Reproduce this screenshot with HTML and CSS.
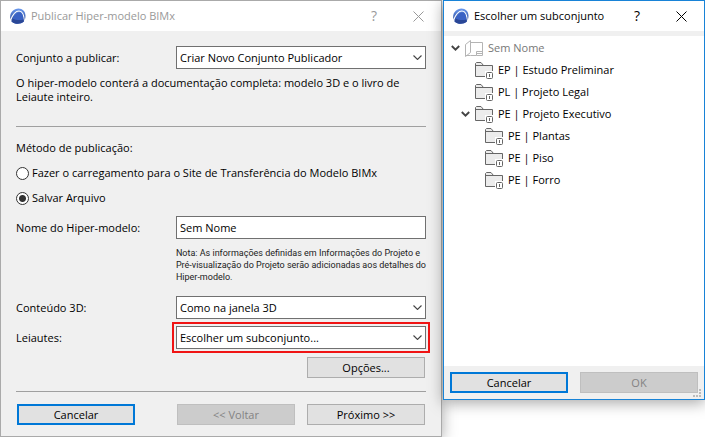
FILE: index.html
```html
<!DOCTYPE html>
<html lang="pt-BR">
<head>
    <meta charset="UTF-8">
    <meta name="viewport" content="width=device-width, initial-scale=1.0">
    <title>Publicar Hiper-modelo BIMx</title>
    <link rel="stylesheet" href="styles.css">
</head>
<body>
    <svg class="symbols" aria-hidden="true">
        <defs>
            <linearGradient id="blue" x1="0" y1="0" x2="0" y2="1">
                <stop offset="0" stop-color="#6a9af0"/>
                <stop offset="1" stop-color="#2a4796"/>
            </linearGradient>
        </defs>
        <symbol id="logo" viewBox="0 0 16 16">
            <path d="M.2 10C-.4 4.500 3.500.4 8.500.4c4 0 7 3 7 7.300 0 2.500-.6 4.300-1.800 5.800L8 12 1 12.500z" fill="url(#blue)"/>
            <path d="M.5 12.500C2.500 7 5.500 3 9 3c3.500 0 5 3.500 5.300 10" fill="none" stroke="#fff" stroke-width="1.200"/>
            <path d="M1.500 13.500C3.500 8 6.600 4.200 9.200 4.200c2.800 0 4.200 3.600 4.500 9.600-3.200 2.700-9 2.700-12.200-.3z" fill="#3a62c4"/>
            <path d="M1.500 13.500l1.200-2.700c3.300 1.600 7.400 1.600 10.900.6l.1 2.400c-3.200 2.700-9 2.700-12.200-.3z" fill="#2a4796"/>
        </symbol>
        <symbol id="close" viewBox="0 0 11 11">
            <path d="M.5.5l10 10M10.5.5l-10 10" fill="none" stroke="currentColor"/>
        </symbol>
        <symbol id="chevron" viewBox="0 0 9 5">
            <path d="M.5.5l4 4 4-4" fill="none" stroke="#444" stroke-width="1.1"/>
        </symbol>
        <symbol id="arrow" viewBox="0 0 9 6">
            <path d="M.8 1l3.700 3.600L8.200 1" fill="none" stroke="#444" stroke-width="1.900"/>
        </symbol>
        <symbol id="book" viewBox="0 0 18 17">
            <path d="M.5 4.500L5.500.5v12l-5 4zM5.500 2.500h12v8M5.500 15.500h-5M5.500 15.500h6" fill="none" stroke="#b4b4b4"/>
            <path d="M17.500 10v5.500h-6v-4h6M12 13.500h5" fill="none" stroke="#b4b4b4"/>
        </symbol>
        <symbol id="folder" viewBox="0 0 18 17">
            <path d="M.5 14.500V1.500L1.500.5h4l3 3h9v11z" fill="#ececec"/>
            <path d="M10 14.500H.5V1.500L1.500.5h4.500l2.500 3M.5 3.500h17V9" fill="none" stroke="#666"/>
            <path d="M10 9h8v8h-8z" fill="#fff"/>
            <rect x="11.500" y="10.500" width="6" height="6" rx="1" fill="#fff" stroke="#666"/>
            <path d="M14.500 12v3" stroke="#666"/>
        </symbol>
    </svg>

    <div class="desktop">
        <form class="window publish">
            <header class="titlebar">
                <svg class="logo"><use href="#logo"/></svg>
                <h1>Publicar Hiper-modelo BIMx</h1>
                <button type="button" class="title-btn" aria-label="Ajuda">?</button>
                <button type="button" class="title-btn" aria-label="Fechar"><svg class="close"><use href="#close"/></svg></button>
            </header>

            <div class="content">
                <div class="row">
                    <label for="set">Conjunto a publicar:</label>
                    <div class="select">
                        <select id="set"><option>Criar Novo Conjunto Publicador</option></select>
                        <svg class="chevron"><use href="#chevron"/></svg>
                    </div>
                </div>
                <p class="info">O hiper-modelo conterá a documentação completa: modelo 3D e o livro de Leiaute inteiro.</p>

                <hr>

                <fieldset class="method">
                    <legend>Método de publicação:</legend>
                    <label><input type="radio" name="method">Fazer o carregamento para o Site de Transferência do Modelo BIMx</label>
                    <label><input type="radio" name="method" checked>Salvar Arquivo</label>
                </fieldset>

                <div class="row">
                    <label for="name">Nome do Hiper-modelo:</label>
                    <input type="text" id="name" value="Sem Nome">
                </div>
                <p class="note">Nota: As informações definidas em Informações do Projeto e Pré-visualização do Projeto serão adicionadas aos detalhes do Hiper-modelo.</p>

                <div class="row">
                    <label for="content3d">Conteúdo 3D:</label>
                    <div class="select">
                        <select id="content3d"><option>Como na janela 3D</option></select>
                        <svg class="chevron"><use href="#chevron"/></svg>
                    </div>
                </div>
                <div class="row layouts">
                    <label for="layouts">Leiautes:</label>
                    <div class="select highlight">
                        <select id="layouts"><option>Escolher um subconjunto...</option></select>
                        <svg class="chevron"><use href="#chevron"/></svg>
                    </div>
                </div>
                <div class="options">
                    <button type="button" class="btn">Opções...</button>
                </div>

                <hr>

                <div class="actions">
                    <button type="button" class="btn primary cancel">Cancelar</button>
                    <button type="button" class="btn" disabled>&lt;&lt; Voltar</button>
                    <button type="button" class="btn">Próximo &gt;&gt;</button>
                </div>
            </div>
        </form>

        <section class="window chooser">
            <header class="titlebar">
                <svg class="logo"><use href="#logo"/></svg>
                <h2>Escolher um subconjunto</h2>
                <button type="button" class="title-btn" aria-label="Ajuda">?</button>
                <button type="button" class="title-btn" aria-label="Fechar"><svg class="close"><use href="#close"/></svg></button>
            </header>

            <ul class="tree">
                <li>
                    <div class="node root"><svg class="arrow"><use href="#arrow"/></svg><svg class="icon"><use href="#book"/></svg>Sem Nome</div>
                    <ul>
                        <li><div class="node"><span class="arrow"></span><svg class="icon"><use href="#folder"/></svg>EP | Estudo Preliminar</div></li>
                        <li><div class="node"><span class="arrow"></span><svg class="icon"><use href="#folder"/></svg>PL | Projeto Legal</div></li>
                        <li>
                            <div class="node"><svg class="arrow"><use href="#arrow"/></svg><svg class="icon"><use href="#folder"/></svg>PE | Projeto Executivo</div>
                            <ul>
                                <li><div class="node"><span class="arrow"></span><svg class="icon"><use href="#folder"/></svg>PE | Plantas</div></li>
                                <li><div class="node"><span class="arrow"></span><svg class="icon"><use href="#folder"/></svg>PE | Piso</div></li>
                                <li><div class="node"><span class="arrow"></span><svg class="icon"><use href="#folder"/></svg>PE | Forro</div></li>
                            </ul>
                        </li>
                    </ul>
                </li>
            </ul>

            <footer class="chooser-actions">
                <button type="button" class="btn primary">Cancelar</button>
                <button type="button" class="btn" disabled>OK</button>
                <svg class="grip" viewBox="0 0 8 8" fill="#bbb">
                    <path d="M6 0h2v2H6zM6 3h2v2H6zM0 6h2v2H0zM3 6h2v2H3zM6 6h2v2H6z"/>
                </svg>
            </footer>
        </section>
    </div>
</body>
</html>
```

FILE: styles.css
```css
* {
    box-sizing: border-box;
}

body {
    margin: 0;
    background-color: #fff;
    color: #000;
    font-family: "Open Sans", "Noto Sans", sans-serif;
    font-size: 11px;
    line-height: 14px;
}

h1,
h2,
p,
ul,
fieldset {
    margin: 0;
    padding: 0;
}

ul {
    list-style: none;
}

svg {
    display: block;
    flex: none;
}

.symbols {
    position: absolute;
    width: 0;
    height: 0;
}

.desktop {
    display: grid;
    grid-template-columns: 442fr 262fr;
    gap: 1px;
    align-items: start;
}

.window {
    border: 1px solid #aaa;
    background-color: #f0f0f0;
    box-shadow: 0 3px 14px rgba(0, 0, 0, 0.35);
}

.titlebar {
    display: flex;
    align-items: center;
    height: 30px;
    padding: 0 17px 0 9px;
    background-color: #fff;
}

.titlebar h1,
.titlebar h2 {
    flex: 1;
    font-size: 11px;
    font-weight: normal;
    white-space: nowrap;
}

.logo {
    width: 16px;
    height: 16px;
    margin-right: 5px;
}

.title-btn {
    padding: 0;
    border: none;
    background: none;
    color: inherit;
    font-family: inherit;
    font-size: 14px;
    line-height: 14px;
}

.title-btn + .title-btn {
    margin-left: 36px;
}

.close {
    width: 11px;
    height: 11px;
}

/* publish dialog */
.publish .titlebar {
    color: #999;
}

.content {
    padding: 15px 15px 11px;
}

.row {
    display: grid;
    grid-template-columns: 160fr 250fr;
    align-items: center;
}

.layouts {
    margin-top: 7px;
}

.select {
    position: relative;
}

select,
input[type="text"] {
    display: block;
    width: 100%;
    height: 23px;
    padding: 0 3px;
    border: 1px solid #707070;
    border-radius: 0;
    background-color: #fff;
    color: #000;
    font-family: inherit;
    font-size: 11px;
    appearance: none;
    outline: none;
}

.chevron {
    position: absolute;
    top: 9px;
    right: 4px;
    width: 9px;
    height: 5px;
    pointer-events: none;
}

.highlight {
    outline: 2px solid #f01414;
    outline-offset: 2px;
}

.info {
    margin-top: 7px;
}

hr {
    height: 1px;
    margin: 22px 0 14px;
    border: none;
    background-color: #a0a0a0;
}

.method {
    display: flex;
    flex-direction: column;
    gap: 11px;
    margin-bottom: 11px;
    border: none;
}

.method legend {
    margin-bottom: 11px;
    padding: 0;
}

.method label {
    display: flex;
    align-items: center;
    white-space: nowrap;
}

.method input {
    width: 13px;
    height: 13px;
    margin: 0 3px 0 0;
    border: 1px solid #333;
    border-radius: 50%;
    background-color: #fff;
    appearance: none;
}

.method input:checked {
    background-image: radial-gradient(circle, #333 3px, #fff 4px);
}

.note {
    margin: 8px 0 13px 39%;
    color: #222;
    font-family: Roboto, "Open Sans", sans-serif;
    font-size: 9px;
    line-height: 12px;
}

.btn {
    width: 118px;
    height: 21px;
    padding: 0;
    border: 1px solid #adadad;
    background-color: #e1e1e1;
    color: #000;
    font-family: inherit;
    font-size: 11px;
    line-height: 14px;
}

.btn.primary {
    border: 2px solid #0078d7;
}

.btn:disabled {
    border-color: #bfbfbf;
    background-color: #ccc;
    color: #838383;
}

.options {
    display: flex;
    justify-content: flex-end;
    margin-top: 8px;
    padding-right: 1px;
}

.options + hr {
    margin: 13px 0 12px;
}

.actions {
    display: flex;
    justify-content: flex-end;
    gap: 12px;
    padding: 0 1px;
}

.cancel {
    margin-right: auto;
}

/* subset dialog */
.chooser {
    border-color: #1883d7;
    z-index: 1;
}

.tree {
    min-height: 330px;
    margin-top: 5px;
    padding: 1px 0 0 7px;
    background-color: #fff;
}

.tree ul {
    padding-left: 10px;
}

.node {
    display: flex;
    align-items: center;
    height: 22px;
    white-space: nowrap;
}

.root {
    color: #777;
}

.arrow {
    width: 9px;
    height: 6px;
    margin-right: 5px;
}

.icon {
    width: 18px;
    height: 17px;
    margin-right: 5px;
}

.chooser-actions {
    position: relative;
    display: flex;
    justify-content: space-between;
    padding: 6px;
}

.grip {
    position: absolute;
    right: 3px;
    bottom: 2px;
    width: 8px;
    height: 8px;
}
```
